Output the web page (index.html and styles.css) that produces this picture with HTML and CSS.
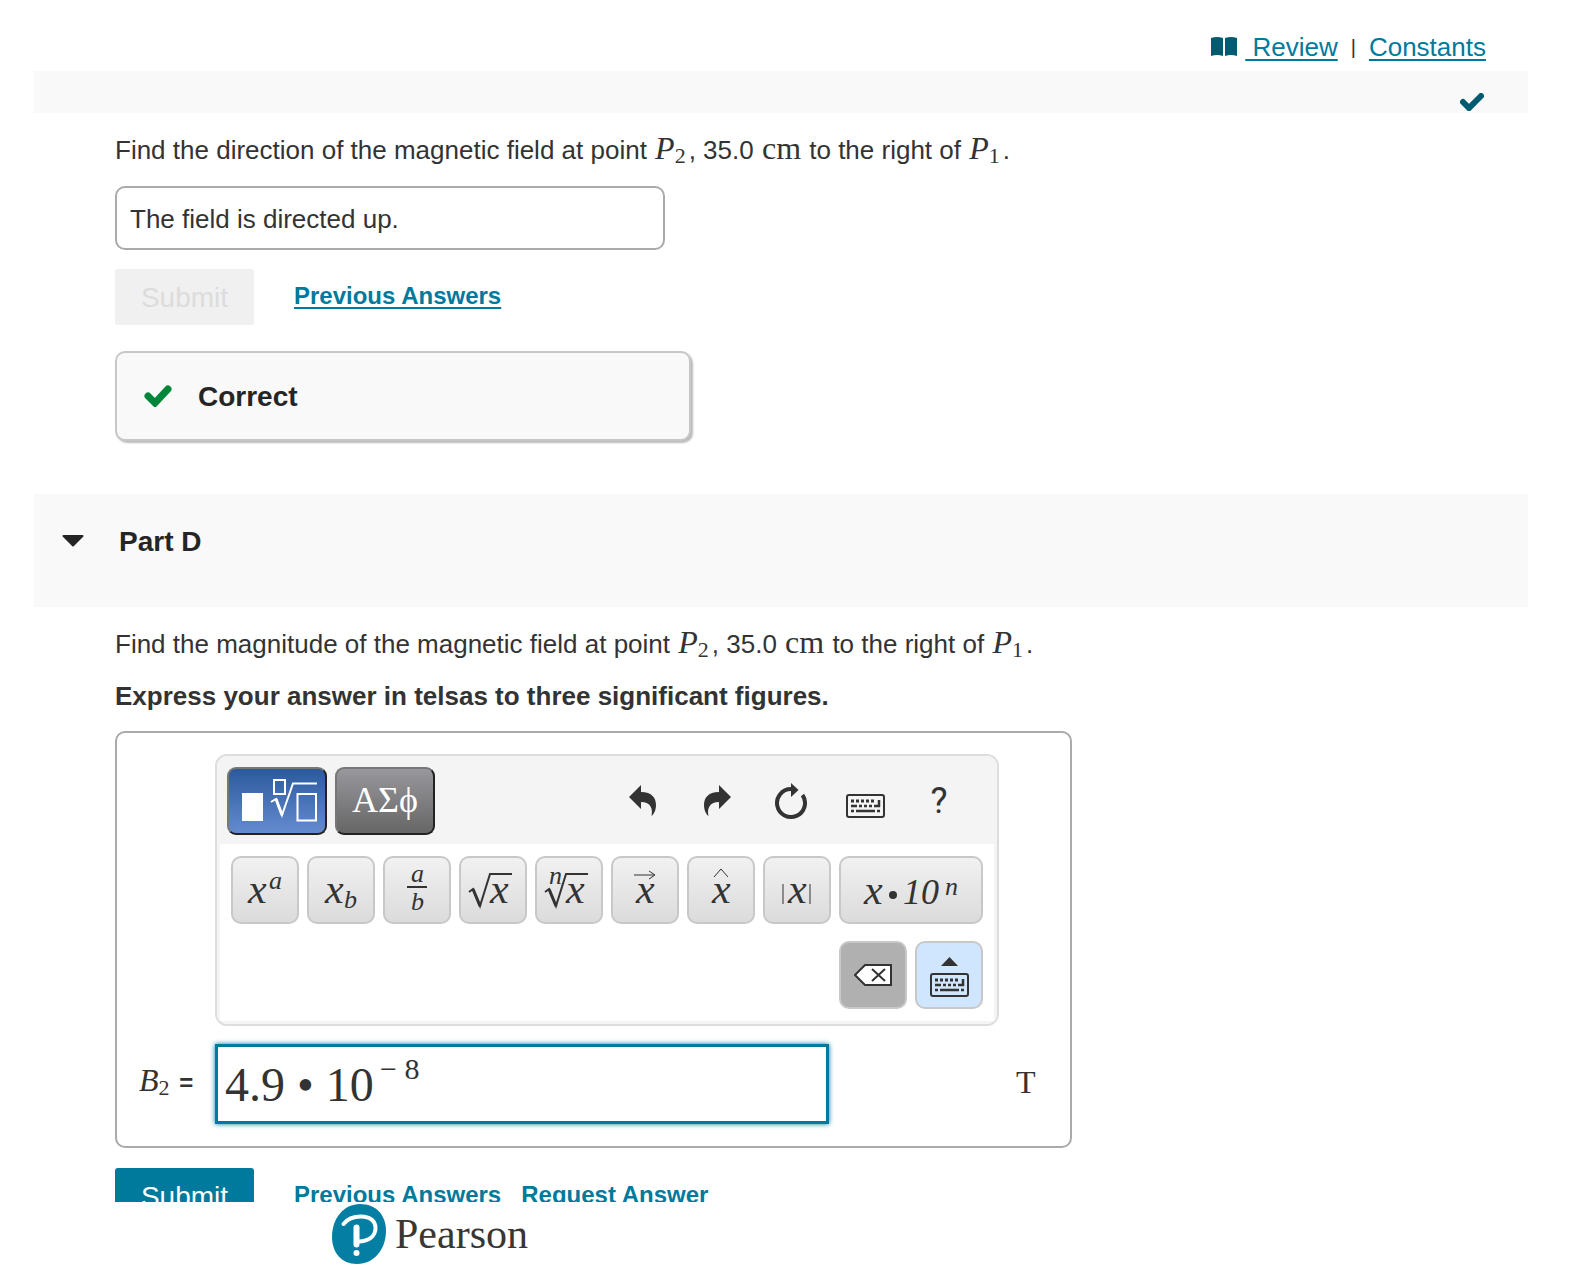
FILE: index.html
```html
<!DOCTYPE html>
<html lang="en">
<head>
    <meta charset="UTF-8">
    <meta name="viewport" content="width=device-width, initial-scale=1.0">
    <title>Mastering Physics - Part D</title>
    <link rel="stylesheet" href="styles.css">
</head>
<body>
    <main class="scroller">
        <nav class="top-links">
            <svg class="book" width="26" height="20" viewBox="0 0 26 20"><path d="M0 1Q6-1 12 1V19Q6 17 0 19ZM14 1Q20-1 26 1V19Q20 17 14 19Z"/></svg>
            <a href="#review">&nbsp;Review</a>
            <span class="divider">|</span>
            <a href="#constants">Constants</a>
        </nav>

        <div class="band">
            <svg width="24" height="18" viewBox="0 0 24 18"><path d="M3 9L9 15L21 3" fill="none" stroke="#005a70" stroke-width="6" stroke-linecap="round"/></svg>
        </div>

        <section class="part">
            <p class="question">Find the direction of the magnetic field at point <span class="math"><i>P</i><sub>2</sub></span>, 35.0 <span class="math">cm</span> to the right of <span class="math"><i>P</i><sub>1</sub></span>.</p>
            <input class="choice" type="text" aria-label="Direction" value="The field is directed up." readonly>
            <div class="actions">
                <button class="submit" disabled>Submit</button>
                <a class="underlined" href="#previous">Previous Answers</a>
            </div>
            <div class="feedback">
                <svg width="28" height="22" viewBox="0 0 28 22"><path d="M4 11L11 18L24 4" fill="none" stroke="#008638" stroke-width="7" stroke-linecap="round"/></svg>
                <h3>Correct</h3>
            </div>
        </section>

        <header class="part-header">
            <svg width="22" height="12" viewBox="0 0 22 12"><path d="M1.500 1H20.500L11 10.500Z" fill="#252525" stroke="#252525" stroke-width="2" stroke-linejoin="round"/></svg>
            <h2>Part D</h2>
        </header>

        <section class="part">
            <p class="question">Find the magnitude of the magnetic field at point <span class="math"><i>P</i><sub>2</sub></span>, 35.0 <span class="math">cm</span> to the right of <span class="math"><i>P</i><sub>1</sub></span>.</p>
            <p class="instructions">Express your answer in telsas to three significant figures.</p>

            <div class="answer-box">
                <div class="keypad">
                    <div class="toolbar">
                        <button class="tab tab-active" aria-label="Templates">
                            <svg width="96" height="64" viewBox="2 2 96 64">
                                <path d="M15 26H36V54H15Z" fill="#fff"/>
                                <g fill="none" stroke="#fff" stroke-width="2">
                                    <path d="M47 13H58V27H47Z"/>
                                    <path d="M44 35L49 32L55 48L66 16.500H90"/>
                                    <path d="M49 32L55 48" stroke-width="3"/>
                                    <path d="M70.500 27H89V53.500H70.500Z"/>
                                </g>
                            </svg>
                        </button>
                        <button class="tab">ΑΣϕ</button>
                        <div class="tools">
                            <button aria-label="Undo"><svg width="28" height="32" viewBox="0 0 28 32"><path d="M0 12L12 0V7C23 7 27 13 27 20C27 25 25 29 22.500 31C24 24 22 17 12 17V24Z"/></svg></button>
                            <button aria-label="Redo"><svg width="28" height="32" viewBox="0 0 28 32"><path d="M28 12L16 0V7C5 7 1 13 1 20C1 25 3 29 5.500 31C4 24 6 17 16 17V24Z"/></svg></button>
                            <button aria-label="Reset"><svg width="34" height="38" viewBox="0 0 34 38"><path d="M17 7A14 14 0 1 0 28.500 13" fill="none" stroke="#333" stroke-width="4"/><path d="M17 1L24.500 8L17 15Z"/></svg></button>
                            <button class="keys-icon" aria-label="Keyboard shortcuts">
                                <svg width="39" height="24" viewBox="0 0 39 24">
                                    <rect x="1" y="1" width="37" height="22" rx="2" fill="none" stroke="#333" stroke-width="2"/>
                                    <path d="M5 7H30" fill="none" stroke="#333" stroke-width="3" stroke-dasharray="3 2"/>
                                    <path d="M5 12H11M13 12H16M18 12H21M23 12H26M28 12H34M33 6V13M5 17H8M10 17H29M31 17H34" fill="none" stroke="#333" stroke-width="2.500"/>
                                </svg>
                            </button>
                            <button class="help">?</button>
                        </div>
                    </div>
                    <div class="keys">
                        <div class="key-row">
                            <button class="key"><svg width="64" height="64" viewBox="2 2 64 64"><text x="17" y="47" class="big">x</text><text x="38" y="33" class="small">a</text></svg></button>
                            <button class="key"><svg width="64" height="64" viewBox="2 2 64 64"><text x="18" y="47" class="big">x</text><text x="37" y="52" class="small">b</text></svg></button>
                            <button class="key"><svg width="64" height="64" viewBox="2 2 64 64"><text x="28" y="26" class="small">a</text><path d="M24 31H44" class="stroke"/><text x="28" y="54" class="small">b</text></svg></button>
                            <button class="key"><svg width="64" height="64" viewBox="2 2 64 64"><path d="M10 36L14 33L21 50L31 18H53" class="stroke"/><path d="M14 33L21 50" class="stroke thick"/><text x="31" y="47" class="big">x</text></svg></button>
                            <button class="key"><svg width="64" height="64" viewBox="2 2 64 64"><text x="14" y="28" class="small">n</text><path d="M10 36L14 33L21 50L31 18H53" class="stroke"/><path d="M14 33L21 50" class="stroke thick"/><text x="31" y="47" class="big">x</text></svg></button>
                            <button class="key"><svg width="64" height="64" viewBox="2 2 64 64"><path d="M23 19H43M38 15L44 19L38 23" class="stroke thin"/><text x="25" y="47" class="big">x</text></svg></button>
                            <button class="key"><svg width="64" height="64" viewBox="2 2 64 64"><path d="M27 21L34 13L41 21" class="stroke thin"/><text x="25" y="47" class="big">x</text></svg></button>
                            <button class="key"><svg width="64" height="64" viewBox="2 2 64 64"><path d="M20 28V48M47 28V48" class="stroke thin"/><text x="25" y="47" class="big">x</text></svg></button>
                            <button class="key key-wide"><svg width="140" height="64" viewBox="2 2 140 64"><text x="25" y="48" class="big">x</text><circle cx="54" cy="39" r="4"/><text x="64" y="48" class="digits">10</text><text x="106" y="39" class="small">n</text></svg></button>
                        </div>
                        <div class="key-row">
                            <button class="key key-delete" aria-label="Delete"><svg width="38" height="22" viewBox="0 0 38 22"><g fill="#fff" stroke="#333" stroke-width="2"><path d="M1 11L11 1H37V21H11Z"/><path d="M18 5L31 17M31 5L18 17"/></g></svg></button>
                            <button class="key key-toggle" aria-label="Toggle keyboard">
                                <svg width="39" height="40" viewBox="0 0 39 40">
                                    <path d="M11 9L19.500 0L28 9Z"/>
                                    <rect x="1" y="17" width="37" height="22" rx="2" fill="none" stroke="#333" stroke-width="2"/>
                                    <path d="M5 23H30" fill="none" stroke="#333" stroke-width="3" stroke-dasharray="3 2"/>
                                    <path d="M5 28H11M13 28H16M18 28H21M23 28H26M28 28H34M33 22V29M5 33H8M10 33H29M31 33H34" fill="none" stroke="#333" stroke-width="2.500"/>
                                </svg>
                            </button>
                        </div>
                    </div>
                </div>

                <div class="answer-row">
                    <label class="answer-label" for="base"><span class="math"><i>B</i><sub>2</sub></span> =</label>
                    <div class="field">
                        <input id="base" class="base" type="text" value="4.9 • 10">
                        <input class="exponent" type="text" aria-label="Exponent" value="− 8">
                    </div>
                    <span class="unit">T</span>
                </div>
            </div>

            <div class="actions">
                <button class="submit">Submit</button>
                <a href="#previous">Previous Answers</a>
                <a href="#request">Request Answer</a>
            </div>
        </section>
    </main>

    <footer class="footer">
        <svg width="54" height="60" viewBox="0 0 54 60">
            <path d="M28 0C44 0 54 11 54 27C54 45 42 60 25 60C9 60 0 48 0 33C0 14 12 0 28 0Z" fill="#047fa3"/>
            <path d="M11.500 20C16 14 22 12.500 29 12.500C38 12.500 43.500 17 43.500 24C43.500 32 37 37 26.500 37.500" fill="none" stroke="#fff" stroke-width="4" stroke-linecap="round"/>
            <path d="M24.500 23.500V40.500" fill="none" stroke="#fff" stroke-width="6" stroke-linecap="round"/>
            <circle cx="24.500" cy="49" r="3" fill="#fff"/>
        </svg>
        <span>Pearson</span>
    </footer>
</body>
</html>
```

FILE: styles.css
```css
* {
    box-sizing: border-box;
}
body {
    display: flex;
    flex-direction: column;
    height: 100vh;
    margin: 0;
    background: #fff;
    color: #333;
    font-family: "Liberation Sans", Arial, sans-serif;
    font-size: 26px;
    line-height: 30px;
}
p, h2, h3 {
    margin: 0;
}
h2, h3 {
    padding-top: 2px;
    color: #252525;
    font-size: 28px;
    line-height: 32px;
}
button, input {
    font-family: inherit;
    color: inherit;
}
svg {
    display: block;
    fill: #333;
}
a {
    color: #007a9c;
    text-underline-offset: 3px;
    text-decoration-thickness: 2px;
}

/* the question area is cut off where the footer starts */
.scroller {
    flex: 1;
    min-height: 0;
    overflow: hidden;
    padding: 0 46px 0 34px;
}
.top-links {
    display: flex;
    justify-content: flex-end;
    align-items: center;
    padding: 32px 42px 9px 0;
}
.book {
    fill: #005a70;
    margin-right: 8px;
}
.divider {
    margin: 0 13px;
    font-size: 20px;
}
.band {
    display: flex;
    justify-content: flex-end;
    align-items: flex-end;
    height: 42px;
    padding: 0 44px 2px 0;
    background: #f9f9f9;
}
.part {
    padding-left: 81px;
}

.question {
    padding-top: 17px;
    line-height: 40px;
}
.math, .unit {
    padding: 0 1px;
    font-family: "Liberation Serif", "Times New Roman", serif;
    font-size: 32px;
    font-weight: normal;
    line-height: 1;
}
.math sub {
    font-size: 22px;
    line-height: 0;
    vertical-align: -4px;
    padding-right: 2px;
}
.choice {
    display: block;
    width: 550px;
    height: 64px;
    margin: 16px 0 19px;
    padding: 2px 13px 0;
    border: 2px solid #aaa;
    border-radius: 10px;
    font-size: 26px;
}

.actions {
    display: flex;
    align-items: center;
}
.actions a {
    margin-right: 20px;
    padding-bottom: 2px;
    font-size: 24px;
    font-weight: bold;
    text-decoration: none;
}
.actions .underlined {
    text-decoration: underline 2px;
}
.submit {
    width: 139px;
    height: 56px;
    margin-right: 40px;
    padding: 2px 0 0;
    border: none;
    border-radius: 3px;
    background: #007a9c;
    color: #fff;
    font-size: 28px;
}
.submit:disabled {
    background: #f0f0f0;
    color: #dcdcdc;
}

.feedback {
    display: flex;
    align-items: center;
    gap: 26px;
    width: 576px;
    height: 90px;
    margin: 26px 0 53px;
    padding-left: 27px;
    border: 2px solid #c7c7c7;
    border-radius: 10px;
    background: #f9f9f9;
    box-shadow: 2px 2px 2px #bbb;
}
.part-header {
    display: flex;
    align-items: center;
    gap: 35px;
    height: 113px;
    padding: 0 28px 20px;
    background: #f9f9f9;
}
.instructions {
    padding: 17px 0 20px;
    font-weight: bold;
}

.answer-box {
    width: 957px;
    margin-bottom: 20px;
    padding: 21px 0 22px;
    border: 2px solid #aaa;
    border-radius: 10px;
}
.keypad {
    width: 784px;
    margin: 0 0 18px 98px;
    border: 2px solid #ddd;
    border-radius: 12px;
    overflow: hidden;
}
.toolbar {
    display: flex;
    align-items: center;
    gap: 8px;
    height: 88px;
    padding: 2px 21px 0 10px;
    background: #f4f4f4;
}
.tab {
    width: 100px;
    height: 68px;
    padding: 0 0 2px;
    border: 2px solid;
    border-color: #777 #222 #222 #777;
    border-radius: 9px;
    background: linear-gradient(#98979c, #666);
    color: #fff;
    font-family: "Liberation Serif", serif;
    font-size: 36px;
}
.tab-active {
    padding: 0;
    background: linear-gradient(#2c599d, #648bd0);
}
.tools {
    display: flex;
    margin-left: auto;
}
.tools button {
    display: flex;
    align-items: center;
    justify-content: center;
    width: 74px;
    height: 68px;
    padding: 0;
    border: none;
    background: none;
}
.tools .keys-icon {
    padding-top: 10px;
}
.tools .help {
    font-family: Roboto, sans-serif;
    font-size: 36px;
}

.keys {
    display: flex;
    flex-direction: column;
    gap: 17px;
    padding: 12px 11px;
    border: 3px solid #f4f4f4;
    border-top: none;
}
.key-row {
    display: flex;
    justify-content: flex-end;
    gap: 8px;
}
.key {
    display: flex;
    align-items: center;
    justify-content: center;
    width: 68px;
    height: 68px;
    padding: 0;
    border: 2px solid #c8c8c8;
    border-radius: 10px;
    background: linear-gradient(#f1f1f1, #dbdbdb);
    font-family: "Liberation Serif", serif;
    font-style: italic;
}
.key-wide {
    width: 144px;
}
.key-delete {
    background: #b0b0b0;
}
.key-toggle {
    padding-top: 4px;
    background: #d0e6ff;
}
.big {
    font-size: 42px;
}
.digits {
    font-size: 36px;
}
.small {
    font-size: 26px;
}
.stroke {
    fill: none;
    stroke: #333;
    stroke-width: 2px;
}
.thick {
    stroke-width: 3px;
}
.thin {
    stroke-width: 1px;
}

.answer-row {
    display: flex;
    align-items: center;
}
.answer-label {
    width: 98px;
    padding: 0 0 6px 21px;
    font-size: 24px;
    font-weight: bold;
}
.field {
    display: flex;
    width: 614px;
    height: 80px;
    padding: 0 7px;
    border: 3px solid #007a9c;
    box-shadow: 0 0 5px #007a9c;
}
.field input {
    border: none;
    outline: none;
    padding: 0;
    background: none;
    font-family: "Liberation Serif", serif;
}
.base {
    width: 155px;
    padding-top: 2px;
    font-size: 48px;
}
.exponent {
    width: 100px;
    height: 44px;
    font-size: 30px;
}
.unit {
    margin-left: 186px;
    padding-bottom: 4px;
}

.footer {
    display: flex;
    align-items: center;
    gap: 9px;
    height: 66px;
    padding: 0 332px 3px;
    color: #3a3632;
    font-family: "Liberation Serif", serif;
    font-size: 42px;
}
```
